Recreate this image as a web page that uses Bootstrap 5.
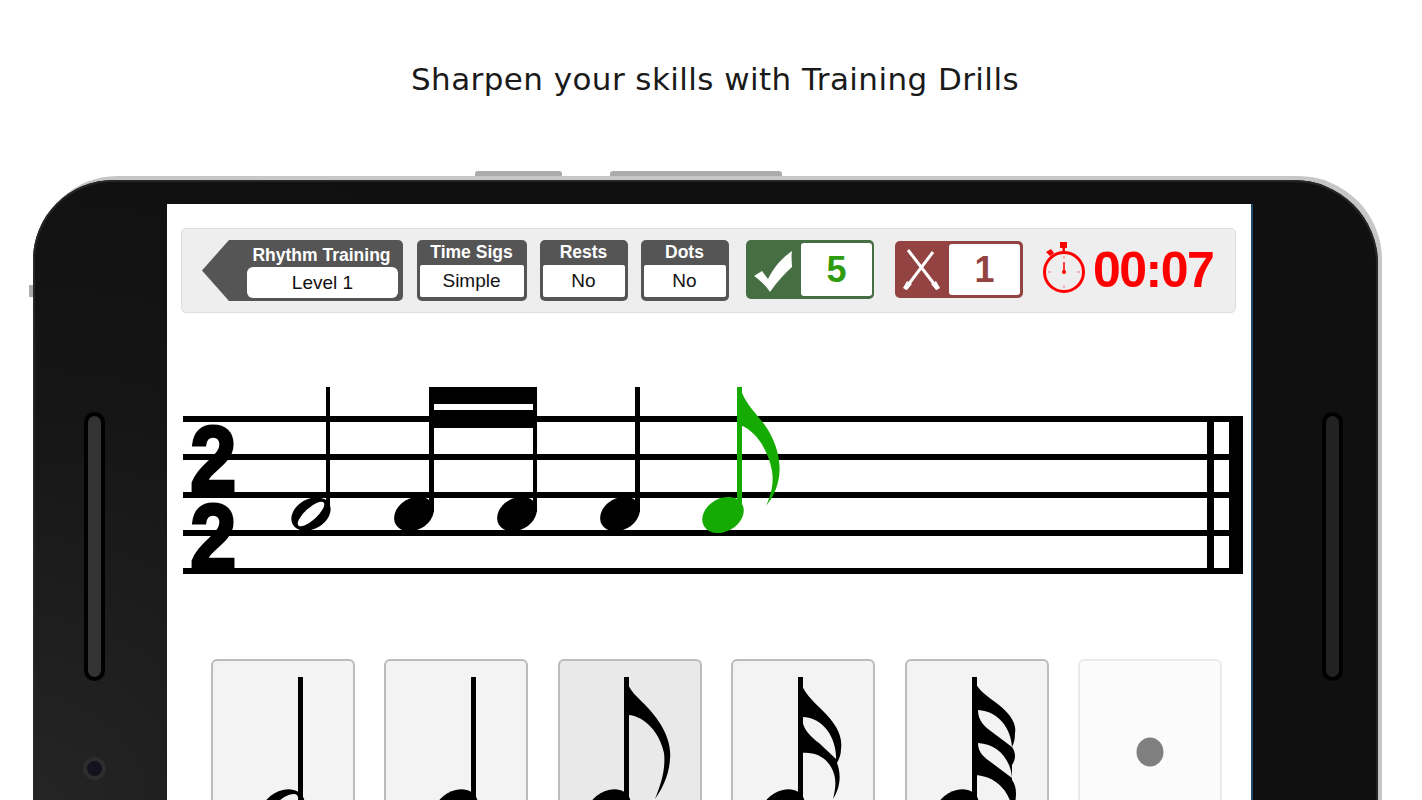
<!DOCTYPE html>
<html lang="en">
<head>
  <meta charset="UTF-8">
  <title>Training Drills</title>
  <meta name="viewport" content="width=device-width, initial-scale=1">
  <link href="https://cdn.jsdelivr.net/npm/bootstrap@5.3.0/dist/css/bootstrap.min.css" rel="stylesheet">
  <style>
    html, body { height: 800px; overflow: hidden; background: #fff; }
    .shot-title { height: 180px; padding: 57px 0 0 8px; font: 400 31px/44px "DejaVu Sans", sans-serif; letter-spacing: .42px; color: #1a1a1a; }

    .phone { position: relative; width: 1345px; height: 630px; margin-left: 33px; background: radial-gradient(circle at 0 100%, #252525 0, #151515 420px, #101010 700px); border-radius: 80px 84px 0 0; box-shadow: 4px -4px 0 #c6c6c6, inset 0 0 0 2px #262626; }
    .phone-btn { position: absolute; background: #ababab; }
    .btn-a { left: 442px; top: -9px; width: 87px; height: 5px; border-radius: 3px 3px 0 0; }
    .btn-b { left: 577px; top: -9px; width: 172px; height: 5px; border-radius: 3px 3px 0 0; }
    .btn-c { left: -4px; top: 105px; width: 4px; height: 12px; }
    .bezel-l { width: 134px; flex: none; padding: 232px 0 0 51px; }
    .bezel-r { width: 125px; flex: none; padding: 232px 0 0 69px; }
    .slot { width: 21px; height: 269px; padding: 4px; background: #000; border-radius: 11px; }
    .slot i { display: block; height: 100%; background: #333; border-radius: 7px; }
    .bezel-r .slot i { background: #222; }
    .cam { width: 23px; height: 23px; margin: 76px 0 0 -1px; border: 4px solid #2d2d2d; border-radius: 50%; background: #15121f; }

    .screen { width: 1086px; flex: none; margin-top: 24px; padding: 24px 0 0 14px; background: #fff; border-right: 2px solid #1f4a6a; overflow: hidden; }
    .tbar { width: 1055px; height: 85px; padding: 11px 0 0 20px; background: #eee; border: 1px solid #ddd; border-radius: 5px; font-family: "Liberation Sans", sans-serif; }
    .opt { height: 61px; margin-right: 13px; padding: 0 3px 4px; background: #555; border-radius: 5px; color: #fff; font-weight: 700; font-size: 17.500px; line-height: 25px; text-align: center; display: flex; flex-direction: column; }
    .opt span { flex: 1; background: #fff; color: #111; font-weight: 400; font-size: 19px; line-height: 31px; border-radius: 2px; }
    .opt-first { width: 201px; margin-right: 13.500px; padding: 0 5px 3px 45px; clip-path: polygon(0 50%, 27px 0, 100% 0, 100% 100%, 27px 100%); }
    .opt-first b { margin-left: -2px; line-height: 30px; height: 27px; }
    .opt-first span { border-radius: 6px; }
    .w-sigs { width: 110px; } .w-rests { width: 88px; } .w-dots { width: 88px; margin-right: 17.500px; }
    .tally { display: flex; height: 59px; padding: 3px 3px 3px 0; border-radius: 5px; font-weight: 700; font-size: 36px; line-height: 53px; text-align: center; }
    .tally svg { flex: none; }
    .tally span { flex: 1; background: #fff; border-radius: 3px; }
    .tally-ok { width: 128px; margin-right: 21px; padding-right: 2px; background: #456f42; color: #2f9c0e; }
    .tally-no { width: 128px; margin-right: 20px; height: 57px; margin-top: 1px; background: #944343; color: #944343; }
    .tally-no span { line-height: 51px; }
    .clock { flex: none; margin-top: -2px; margin-right: 7px; }
    .timer { margin-top: 1px; font-weight: 700; font-size: 50px; line-height: 58px; color: #f00; letter-spacing: -1.500px; }

    .staff { display: block; margin: 72px 0 0 1px; }
    .keys { width: 1011px; margin: 69px 0 0 30px; }
    .key { width: 144px; height: 200px; flex: none; padding: 0; background: #f3f3f3; border: 2px solid #bcbcbc; border-radius: 6px; }
    .key svg { display: block; }
    .key-on { background: #e9e9e9; }
    .key:disabled { opacity: 1; background: #fbfbfb; border-color: #ebebeb; }
  </style>
</head>
<body>
  <div class="shot-title text-center">Sharpen your skills with Training Drills</div>

  <div class="phone d-flex">
    <div class="phone-btn btn-a"></div>
    <div class="phone-btn btn-b"></div>
    <div class="phone-btn btn-c"></div>

    <div class="bezel-l">
      <div class="slot"><i></i></div>
      <div class="cam"></div>
    </div>

    <div class="screen">
      <div class="tbar d-flex">
        <div class="opt opt-first"><b>Rhythm Training</b><span>Level 1</span></div>
        <div class="opt w-sigs">Time Sigs<span>Simple</span></div>
        <div class="opt w-rests">Rests<span>No</span></div>
        <div class="opt w-dots">Dots<span>No</span></div>
        <div class="tally tally-ok">
          <svg width="55" height="53" viewBox="0 0 55 53"><path d="M8 33 L16 28 L22 36 C28 24 36 15 46 8 C45 13 46 19 46 24 C38 31 31 39 24 49 C20 43 14 37 8 33 Z" fill="#fff"/></svg>
          <span>5</span>
        </div>
        <div class="tally tally-no">
          <svg width="54" height="51" viewBox="0 0 54 51"><path d="M13 6 L43 45 M38 8 L10 45" stroke="#fff" stroke-width="3" fill="none"/><path d="M12 37 L8 44 L12 46 L17 40 Z M41 37 L45 44 L41 46 L36 40 Z" fill="#fff"/></svg>
          <span>1</span>
        </div>
        <svg class="clock" width="43" height="56" viewBox="0 0 43 56">
          <circle cx="21" cy="34" r="19.500" fill="none" stroke="#f00" stroke-width="3"/>
          <rect x="17" y="4" width="7" height="6" fill="#f00"/>
          <rect x="19.500" y="10" width="2.500" height="5" fill="#f00"/>
          <path d="M3 14 L8 11 L11 15 L7 18 Z" fill="#f00"/>
          <path d="M21 24 V33" stroke="#f00" stroke-width="1.500"/>
          <circle cx="21" cy="34" r="2" fill="#f00"/>
          <path d="M21 50 V47 M5 34 H8 M34 34 H37 M21 18 V21" stroke="#f77" stroke-width="1"/>
        </svg>
        <div class="timer">00:07</div>
      </div>

      <svg class="staff" width="1064" height="205" viewBox="182 385 1064 205">
        <!-- lineas del pentagrama -->
        <g fill="#000">
          <rect x="183" y="416" width="1060" height="6"/>
          <rect x="183" y="454" width="1060" height="6"/>
          <rect x="183" y="492" width="1060" height="6"/>
          <rect x="183" y="530" width="1060" height="6"/>
          <rect x="183" y="568" width="1060" height="6"/>
          <rect x="1207" y="416" width="7" height="158"/>
          <rect x="1229" y="416" width="14" height="158"/>
        </g>
        <g transform="translate(190 0) scale(.88 1)" font-family="'Liberation Sans', sans-serif" font-weight="700" font-size="95" fill="#000" stroke="#000" stroke-width="3">
          <text x="0" y="492">2</text>
          <text x="0" y="570">2</text>
        </g>
        <!-- blanca -->
        <rect x="326" y="387" width="4" height="125" fill="#000"/>
        <ellipse cx="311" cy="514" rx="21" ry="15" transform="rotate(-30 311 514)" fill="#000"/>
        <ellipse cx="311" cy="514" rx="17" ry="6" transform="rotate(-42 311 514)" fill="#fff"/>
        <!-- semicorcheas -->
        <rect x="429" y="387" width="108" height="17" fill="#000"/>
        <rect x="429" y="410" width="108" height="18" fill="#000"/>
        <rect x="429" y="387" width="5" height="125" fill="#000"/>
        <rect x="533" y="387" width="4" height="125" fill="#000"/>
        <ellipse cx="414" cy="514" rx="21" ry="16" transform="rotate(-30 414 514)" fill="#000"/>
        <ellipse cx="517" cy="514" rx="21" ry="16" transform="rotate(-30 517 514)" fill="#000"/>
        <!-- negra -->
        <rect x="635" y="387" width="5" height="125" fill="#000"/>
        <ellipse cx="620" cy="514" rx="21" ry="16" transform="rotate(-30 620 514)" fill="#000"/>
        <!-- corchea verde -->
        <rect x="737" y="387" width="5" height="125" fill="#16ab03"/>
        <ellipse cx="723" cy="515" rx="22" ry="16.500" transform="rotate(-30 723 515)" fill="#16ab03"/>
        <path d="M740 387 C744 402 754 411 764 424 C776 440 783 463 778 482 C776 491 771 500 766 506 C771 495 774 483 772 471 C768 449 755 430 740 425 Z" fill="#16ab03"/>
      </svg>

      <div class="keys d-flex justify-content-between">
        <button type="button" class="btn key">
          <svg width="140" height="196" viewBox="0 0 140 196">
            <rect x="85" y="16" width="5" height="125" fill="#000"/>
            <ellipse cx="70" cy="147" rx="23" ry="17" transform="rotate(-30 70 147)" fill="#000"/>
            <ellipse cx="70" cy="147" rx="19" ry="8" transform="rotate(-42 70 147)" fill="#f3f3f3"/>
          </svg>
        </button>
        <button type="button" class="btn key">
          <svg width="140" height="196" viewBox="0 0 140 196">
            <rect x="85" y="16" width="5" height="125" fill="#000"/>
            <ellipse cx="70" cy="147" rx="23" ry="17" transform="rotate(-30 70 147)" fill="#000"/>
          </svg>
        </button>
        <button type="button" class="btn key key-on">
          <svg width="140" height="196" viewBox="0 0 140 196">
            <rect x="64" y="16" width="5" height="125" fill="#000"/>
            <ellipse cx="49" cy="147" rx="23" ry="17" transform="rotate(-30 49 147)" fill="#000"/>
            <path d="M66 16 C68 30 78 36 88 47 C100 60 112 78 110 98 C109 115 102 128 95 138 C100 125 106 110 104 92 C100 72 85 55 68 54 Z" fill="#000"/>
          </svg>
        </button>
        <button type="button" class="btn key">
          <svg width="140" height="196" viewBox="0 0 140 196">
            <rect x="65" y="16" width="5" height="125" fill="#000"/>
            <ellipse cx="50" cy="147" rx="23" ry="17" transform="rotate(-30 50 147)" fill="#000"/>
            <path fill-rule="evenodd" d="M66 16 C70 32 80 40 90 50 C102 62 110 74 108 88 C108 94 106 98 104 102 C108 112 108 126 100 138 C103 126 104 116 98 106 C92 96 82 91 69 92 Z M69 56 C69 68 78 76 86 82 L103 98 C104 80 92 56 69 56 Z" fill="#000"/>
          </svg>
        </button>
        <button type="button" class="btn key">
          <svg width="140" height="196" viewBox="0 0 140 196">
            <rect x="65" y="16" width="5" height="125" fill="#000"/>
            <ellipse cx="50" cy="147" rx="23" ry="17" transform="rotate(-30 50 147)" fill="#000"/>
            <path fill-rule="evenodd" d="M66 16 C70 30 82 36 92 44 C102 52 110 62 108 72 C108 78 107 82 105 86 C109 92 109 98 105 104 L105 119 C109 124 110 132 108 142 L104 142 C100 130 90 116 69 114 Z M71 49 C71 60 78 66 85 71 L105 86 C104 68 92 50 71 49 Z M71 82 C71 92 78 97 85 102 L105 117 C104 100 92 83 71 82 Z" fill="#000"/>
          </svg>
        </button>
        <button type="button" class="btn key" disabled>
          <svg width="140" height="196" viewBox="0 0 140 196"><ellipse cx="70" cy="91" rx="13.500" ry="14.500" fill="#808080"/></svg>
        </button>
      </div>
    </div>

    <div class="bezel-r">
      <div class="slot"><i></i></div>
    </div>
  </div>
  <script src="https://cdn.jsdelivr.net/npm/bootstrap@5.3.0/dist/js/bootstrap.bundle.min.js"></script>
</body>
</html>
